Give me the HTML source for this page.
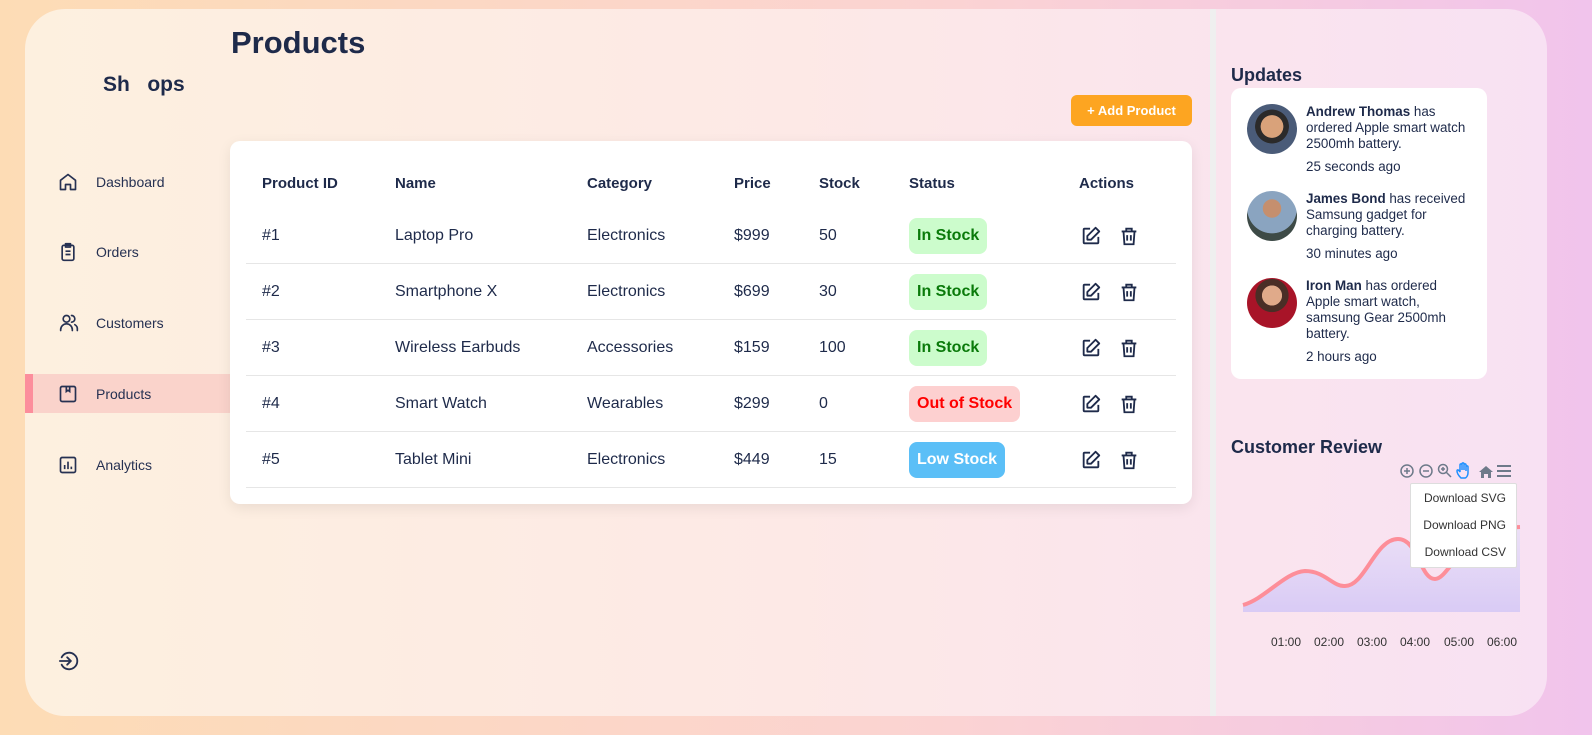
<!DOCTYPE html>
<html><head><meta charset="utf-8"><style>
*{box-sizing:border-box;margin:0;padding:0}
body{width:1592px;height:735px;overflow:hidden;font-family:"Liberation Sans",sans-serif;color:#1e2a4a;background:linear-gradient(90deg,#fddcb5 0%,#fbd3d3 60%,#f1c4ec 100%);position:relative}
.card{position:absolute;left:25px;top:9px;width:1522px;height:707px;border-radius:40px;background:linear-gradient(90deg,#fdf0df 0%,#fde9e6 50%,#f8e1f3 100%);overflow:hidden}
.abs{position:absolute}
.nav{position:absolute;left:0;width:205px;height:39px;display:flex;align-items:center;font-size:14px;color:#263152}
.nav svg{position:absolute;left:33px}
.nav span{position:absolute;left:71px}
.active{background:#fad3cb}
.active:before{content:"";position:absolute;left:0;top:0;width:8px;height:39px;background:#fc8e9c}
.table{position:absolute;left:205px;top:132px;width:962px;height:363px;background:#fff;border-radius:10px;box-shadow:0 4px 14px rgba(0,0,0,.08)}
.th{position:absolute;top:34px;font-weight:bold;font-size:15px}
.row{position:absolute;left:16px;width:930px;height:56px;border-bottom:1px solid #e6e6e6;font-size:16px}
.row div{position:absolute;top:0;line-height:56px}
.badge{top:10px!important;line-height:36px!important;height:36px;padding:0 8px;border-radius:8px;font-weight:bold;font-size:16px}
.g{background:#ccfccc;color:#0a7a0a}.r{background:#fdd0d0;color:#f00}.b{background:#5bbff7;color:#fff}
.upd{position:absolute;left:1206px;top:79px;width:256px;height:291px;background:#fff;border-radius:10px;font-size:13.4px;line-height:16px;color:#1e2a4a}
.av{position:absolute;left:16px;width:50px;height:50px;border-radius:50%}
.ut{position:absolute;left:75px;width:166px}
</style></head><body>
<div class="card">
<div class="abs" style="left:1185px;top:0;width:6px;height:707px;background:#efefef"></div>
<div class="abs" style="left:206px;top:16px;font-size:31px;font-weight:bold">Products</div>
<div class="abs" style="left:78px;top:64px;font-size:21px;font-weight:bold">Sh&nbsp;&nbsp;&nbsp;ops</div>

<div class="nav" style="top:153px"><svg width="20" height="20" viewBox="0 0 24 24" fill="none" stroke="#263152" stroke-width="2" stroke-linejoin="round"><path d="M3 10l9-7 9 7v11H15v-6h-6v6H3z"/></svg><span>Dashboard</span></div>
<div class="nav" style="top:223px"><svg width="20" height="20" viewBox="0 0 24 24" fill="none" stroke="#263152" stroke-width="2" stroke-linejoin="round"><rect x="5" y="4" width="14" height="18" rx="2"/><rect x="9" y="2" width="6" height="4"/><path d="M9 11h6M9 15h6"/></svg><span>Orders</span></div>
<div class="nav" style="top:294px"><svg width="22" height="20" viewBox="0 0 24 24" fill="none" stroke="#263152" stroke-width="2" stroke-linecap="round"><circle cx="9" cy="7" r="4"/><path d="M2 21v-1a7 7 0 0114 0v1M15 3a4 4 0 010 8M19 14a6 6 0 013 6v1"/></svg><span>Customers</span></div>
<div class="nav active" style="top:365px"><svg width="20" height="20" viewBox="0 0 24 24" fill="none" stroke="#263152" stroke-width="2"><rect x="3" y="3" width="18" height="18" rx="2"/><path d="M10 3v6l2-1.5 2 1.5V3"/></svg><span>Products</span></div>
<div class="nav" style="top:436px"><svg width="20" height="20" viewBox="0 0 24 24" fill="none" stroke="#263152" stroke-width="2"><rect x="3" y="3" width="18" height="18" rx="2"/><path d="M8 17v-5M12 17V8M16 17v-3"/></svg><span>Analytics</span></div>
<svg class="abs" style="left:33px;top:641px" width="22" height="22" viewBox="0 0 24 24" fill="none" stroke="#263152" stroke-width="2" stroke-linecap="round"><path d="M4 8a9 9 0 110 8"/><path d="M2 12h12M10 8l4 4-4 4"/></svg>

<div class="abs" style="left:1046px;top:86px;width:121px;height:31px;background:#fda521;border-radius:6px;color:#fff;font-weight:bold;font-size:13px;text-align:center;line-height:31px">+ Add Product</div>

<div class="table">
<div class="th" style="left:32px">Product ID</div><div class="th" style="left:165px">Name</div><div class="th" style="left:357px">Category</div><div class="th" style="left:504px">Price</div><div class="th" style="left:589px">Stock</div><div class="th" style="left:679px">Status</div><div class="th" style="left:849px">Actions</div>
</div>
<div id="rows"></div>

<div class="abs" style="left:1206px;top:56px;font-size:18px;font-weight:bold">Updates</div>
<div class="upd">
<div class="av" style="top:16px;background:radial-gradient(circle at 50% 45%,#d9a27a 0 30%,#2b2a2a 31% 45%,#4a5b78 46%)"></div>
<div class="ut" style="top:16px"><b>Andrew Thomas</b> has ordered Apple smart watch 2500mh battery.<div style="margin-top:7px">25 seconds ago</div></div>
<div class="av" style="top:103px;background:radial-gradient(circle at 50% 35%,#c58f6e 0 22%,#8aa4c0 23% 60%,#3d4a46 61%)"></div>
<div class="ut" style="top:103px"><b>James Bond</b> has received Samsung gadget for charging battery.<div style="margin-top:7px">30 minutes ago</div></div>
<div class="av" style="top:190px;background:radial-gradient(circle at 50% 35%,#e0aa8a 0 24%,#4a2e26 25% 40%,#a81428 41%)"></div>
<div class="ut" style="top:190px"><b>Iron Man</b> has ordered Apple smart watch, samsung Gear 2500mh battery.<div style="margin-top:7px">2 hours ago</div></div>
</div>

<div class="abs" style="left:1206px;top:428px;font-size:18px;font-weight:bold">Customer Review</div>
<svg class="abs" style="left:1210px;top:450px" width="300" height="200">
<defs><linearGradient id="f" x1="0" y1="0" x2="0" y2="1"><stop offset="0" stop-color="#ece0f6"/><stop offset="1" stop-color="#d9cbf5"/></linearGradient></defs>
<path d="M8 146 C30 140 50 113 70 112 C90 112 98 128 110 127 C130 127 140 80 163 80 C183 80 185 120 200 120 C215 120 225 70 285 68 L285 153 L8 153Z" fill="url(#f)"/>
<path d="M8 146 C30 140 50 113 70 112 C90 112 98 128 110 127 C130 127 140 80 163 80 C183 80 185 120 200 120 C215 120 225 70 285 68" fill="none" stroke="#fd8e99" stroke-width="4"/>
<g font-size="12" fill="#333" font-family="Liberation Sans"><text x="36" y="187">01:00</text><text x="79" y="187">02:00</text><text x="122" y="187">03:00</text><text x="165" y="187">04:00</text><text x="209" y="187">05:00</text><text x="252" y="187">06:00</text></g>
</svg>
<svg class="abs" style="left:1374px;top:452px" width="120" height="20" viewBox="0 0 120 20" fill="none" stroke="#6e7a8a" stroke-width="1.5">
<circle cx="8" cy="10" r="6"/><path d="M5 10h6M8 7v6"/>
<circle cx="27" cy="10" r="6"/><path d="M24 10h6"/>
<circle cx="44" cy="8" r="4.5"/><path d="M47 11l5 5M42 8h4M44 6v4"/>
<path d="M62 17c-2-2-4-5-4-7s2-1 3 1V4c0-1.5 2-1.5 2 0V9V3c0-1.5 2-1.5 2 0v6V4c0-1.5 2-1.5 2 0v6V6c0-1.5 2-1.5 2 0v6c0 3-2 5-3 5z" stroke="#1e90ff"/>
<path d="M80 11l7-6 7 6h-2v6h-3v-4h-4v4h-3v-6z" fill="#6e7a8a" stroke="none"/>
<path d="M98 5h14M98 10h14M98 15h14" stroke-width="2"/>
</svg>
<div class="abs" style="left:1385px;top:474px;width:107px;height:85px;background:#fff;border:1px solid #ddd;border-radius:2px;font-size:12px;color:#333;text-align:right;padding-right:10px;line-height:27px;padding-top:1px">Download SVG<br>Download PNG<br>Download CSV</div>
</div>
<script>
var d=[["#1","Laptop Pro","Electronics","$999","50","In Stock","g"],["#2","Smartphone X","Electronics","$699","30","In Stock","g"],["#3","Wireless Earbuds","Accessories","$159","100","In Stock","g"],["#4","Smart Watch","Wearables","$299","0","Out of Stock","r"],["#5","Tablet Mini","Electronics","$449","15","Low Stock","b"]];
var ic='<svg width="22" height="22" viewBox="0 0 24 24" fill="none" stroke="#1e2a4a" stroke-width="2" stroke-linejoin="round" style="position:absolute;left:834px;top:17px"><path d="M11 4H5a1 1 0 00-1 1v14a1 1 0 001 1h14a1 1 0 001-1v-6"/><path d="M17 3l4 4-9 9H8v-4z"/></svg><svg width="22" height="22" viewBox="0 0 24 24" fill="none" stroke="#1e2a4a" stroke-width="2" style="position:absolute;left:872px;top:17px"><path d="M4 7h16M9 7V4h6v3M6 7l1 14h10l1-14M10 11v6M14 11v6"/></svg>';
var h='';d.forEach(function(r,i){h+='<div class="row" style="left:221px;top:'+(199+i*56)+'px"><div style="left:16px">'+r[0]+'</div><div style="left:149px">'+r[1]+'</div><div style="left:341px">'+r[2]+'</div><div style="left:488px">'+r[3]+'</div><div style="left:573px">'+r[4]+'</div><div class="badge '+r[6]+'" style="left:663px">'+r[5]+'</div>'+ic+'</div>'});
document.getElementById('rows').outerHTML=h;
</script>
</body></html>
